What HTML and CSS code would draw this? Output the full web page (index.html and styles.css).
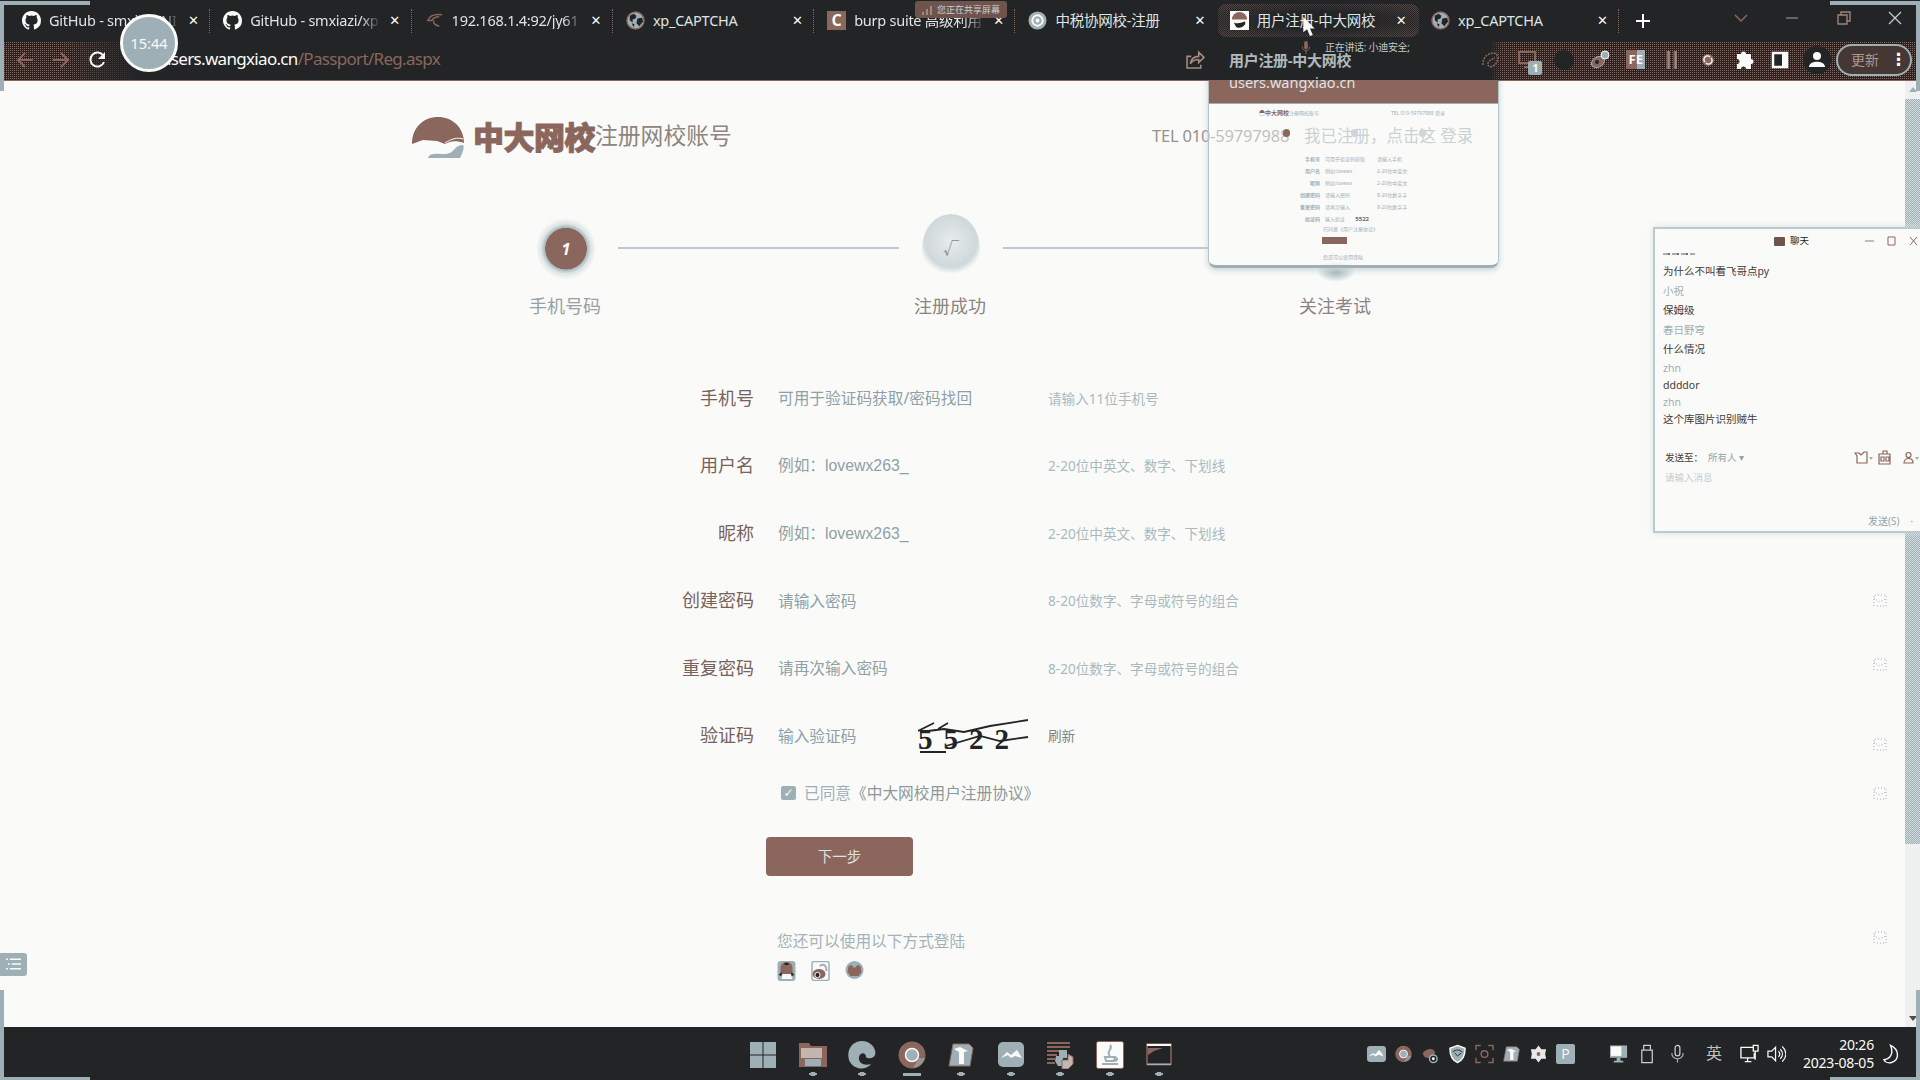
FILE: index.html
```html
<!DOCTYPE html>
<html lang="zh-CN">
<head>
<meta charset="utf-8">
<title>用户注册-中大网校</title>
<link rel="stylesheet" href="styles.css">
</head>
<body>
<svg class="defs" width="0" height="0">
  <symbol id="github" viewBox="0 0 16 16"><path fill="currentColor" d="M8 0C3.58 0 0 3.58 0 8c0 3.54 2.29 6.53 5.47 7.59.4.07.55-.17.55-.38v-1.49c-2.01.37-2.53-.49-2.69-.94-.09-.23-.48-.94-.82-1.13-.28-.15-.68-.52-.01-.53.63-.01 1.08.58 1.23.82.72 1.21 1.87.87 2.33.66.07-.52.28-.87.51-1.07-1.78-.2-3.64-.89-3.64-3.95 0-.87.31-1.59.82-2.15-.08-.2-.36-1.02.08-2.12 0 0 .67-.21 2.2.82a7.4 7.4 0 0 1 4 0c1.53-1.04 2.2-.82 2.2-.82.44 1.1.16 1.92.08 2.12.51.56.82 1.27.82 2.15 0 3.07-1.87 3.75-3.65 3.95.29.25.54.73.54 1.48v2.2c0 .21.15.46.55.38A8 8 0 0 0 16 8c0-4.42-3.58-8-8-8z"/></symbol>
  <symbol id="globe" viewBox="0 0 20 20"><circle cx="10" cy="10" r="9" fill="#9eb0b6" stroke="#8b665d" stroke-width="1.5"/><path fill="#222426" d="M4 5l4-2 3 2-1 3-3 1v3l-3-2zM12 8l5-1 1 4-4 5-3-3zM6 13l3 1-1 3z"/></symbol>
  <symbol id="site" viewBox="0 0 20 20"><path fill="#fafbf9" d="M0 0h20v20H0z"/><path fill="#8b665d" d="M2 9a8 8 0 0 1 16 0z"/><path fill="#222426" d="M4 12c4 2 8 0 12-1v3c-3 4-8 5-10 2z"/></symbol>
  <symbol id="bird" viewBox="0 0 24 20"><rect width="24" height="20" rx="4" fill="#9eb0b6"/><path fill="#fafbf9" d="M2 13l5-4 4 1 4-5 3 3 3 5-6-2-5 2-2-2z"/></symbol>
  <symbol id="chrome" viewBox="0 0 28 28"><circle cx="14" cy="14" r="13.5" fill="#8b665d"/><path fill="#9eb0b6" opacity=".6" d="M27 17a13 13 0 0 1-12 10l6-10z"/><circle cx="14" cy="14" r="6.5" fill="#9eb0b6" stroke="#fafbf9" stroke-width="1.5"/></symbol>
  <symbol id="tee" viewBox="0 0 26 24"><path fill="#9eb0b6" stroke="#8b665d" d="M5 1h16l4 4-3 18H1z"/><path fill="#fafbf9" d="M6 6l6-2 8 4-4 1v12h-5V9z"/></symbol>
  <symbol id="mail" viewBox="0 0 14 14"><path d="M1 12V1h12v11M1 4l5 4 7-3M4 12h7" fill="none" stroke="#9eb0b6" stroke-dasharray="1 2"/></symbol>
</svg>

<header class="tabs">
  <div class="tab"><svg class="fav"><use href="#github"/></svg><span class="tab-title fade">GitHub - smxiazi/NI</span><b class="x">✕</b></div>
  <div class="tab"><svg class="fav"><use href="#github"/></svg><span class="tab-title fade">GitHub - smxiazi/xp</span><b class="x">✕</b></div>
  <div class="tab"><svg class="fav" viewBox="0 0 20 20"><path d="M18 4C10 3 5 5 3 10h4c2-3 4-4 8-4M9 10c0 4 2 5 6 6" fill="none" stroke="#8b665d" stroke-width="1.600"/></svg><span class="tab-title fade">192.168.1.4:92/jy61</span><b class="x">✕</b></div>
  <div class="tab"><svg class="fav"><use href="#globe"/></svg><span class="tab-title">xp_CAPTCHA</span><b class="x">✕</b></div>
  <div class="tab"><i class="fav c-icon">C</i><span class="tab-title fade">burp suite 高级利用</span><b class="x">✕</b></div>
  <div class="tab"><svg class="fav" viewBox="0 0 20 20"><circle cx="10" cy="10" r="9.5" fill="#9eb0b6"/><circle cx="10" cy="10" r="5.5" fill="none" stroke="#fafbf9" stroke-width="2"/><circle cx="10" cy="10" r="2" fill="#fafbf9"/></svg><span class="tab-title">中税协网校-注册</span><b class="x">✕</b></div>
  <div class="tab active"><svg class="fav"><use href="#site"/></svg><span class="tab-title">用户注册-中大网校</span><b class="x">✕</b></div>
  <div class="tab"><svg class="fav"><use href="#globe"/></svg><span class="tab-title">xp_CAPTCHA</span><b class="x">✕</b></div>
  <svg class="plus" viewBox="0 0 14 14"><path d="M7 0v14M0 7h14" stroke="#fafbf9" stroke-width="2"/></svg>
  <div class="window-buttons">
    <svg viewBox="0 0 14 14"><path d="M1 4l6 6 6-6" fill="none" stroke="#8b665d" stroke-width="1.5"/></svg>
    <svg viewBox="0 0 14 14"><path d="M1 7h12" stroke="#9eb0b6"/></svg>
    <svg viewBox="0 0 14 14"><path d="M1 4h9v9H1zM4 4V1h9v9h-3" fill="none" stroke="#9c8379" stroke-width="1.4"/></svg>
    <svg viewBox="0 0 14 14"><path d="M1 1l12 12M13 1L1 13" stroke="#c9d0d2" stroke-width="1.2"/></svg>
  </div>
</header>

<nav class="toolbar">
  <div class="nav-buttons">
    <svg viewBox="0 0 18 18"><path d="M17 9H2M9 2L2 9l7 7" fill="none" stroke="#8b665d" stroke-width="2"/></svg>
    <svg viewBox="0 0 18 18"><path d="M1 9h15M9 2l7 7-7 7" fill="none" stroke="#8b665d" stroke-width="2"/></svg>
    <svg viewBox="0 0 18 18"><path d="M15.5 5A7 7 0 1 0 16 11" fill="none" stroke="#fafbf9" stroke-width="2"/><path d="M17 1v7h-7z" fill="#fafbf9"/></svg>
  </div>
  <div class="address"><span>users.wangxiao.cn<em>/Passport/Reg.aspx</em></span>
    <svg class="share" viewBox="0 0 18 18"><path d="M5 6H1v11h13v-3M4 13c1-5 4-7 8-7V2l5 5-5 5V9C8 9 6 10 4 13z" fill="none" stroke="#a58b82" stroke-width="1.5"/></svg>
  </div>
  <div class="extensions">
    <svg viewBox="0 0 20 20"><path d="M2 15c0-8 4-11 10-12 5 0 6 5 4 9-3 5-8 6-9 3s3-6 7-7" fill="none" stroke="#8b665d" stroke-width="1.6" stroke-dasharray="2 1"/></svg>
    <div class="ext-badge"><svg viewBox="0 0 20 20"><path d="M2 2h16v11H2zM7 17h6" fill="none" stroke="#8b665d" stroke-width="2"/></svg><span>1</span></div>
    <i class="dark-dot"></i>
    <svg viewBox="0 0 20 20"><ellipse cx="8" cy="12" rx="7" ry="5" transform="rotate(-30 8 12)" fill="#8b665d" stroke="#9eb0b6"/><circle cx="7" cy="12" r="2" fill="#222426"/><circle cx="15" cy="5" r="4" fill="#9eb0b6" stroke="#fafbf9"/></svg>
    <i class="fe">FE</i>
    <svg viewBox="0 0 20 20"><path d="M6 1v18M13 1v18" stroke="#8b665d" stroke-width="3"/><path d="M7 1v18M14 1v18" stroke="#9eb0b6" stroke-width="1"/></svg>
    <svg viewBox="0 0 20 20"><circle cx="10" cy="10" r="6" fill="#8b665d"/><path d="M7 12a3.5 3.5 0 0 1 5-5M13 8a3.5 3.5 0 0 1-5 5" fill="none" stroke="#fafbf9" stroke-width="1.5"/></svg>
    <svg viewBox="0 0 20 20"><path fill="#fafbf9" d="M3 4h4a2.5 2.5 0 1 1 5 0h5v5a2.5 2.5 0 1 1 0 5v5h-5a2.5 2.5 0 1 0-5 0H3v-5a2.5 2.5 0 1 0 0-5z"/></svg>
    <svg viewBox="0 0 20 20"><path d="M3 3h14v14H3z" fill="#222426" stroke="#fafbf9" stroke-width="2.5"/><path d="M12 3h5v14h-5z" fill="#fafbf9"/></svg>
    <svg class="person" viewBox="0 0 28 28"><circle cx="14" cy="14" r="14" fill="#222426"/><circle cx="14" cy="10" r="4" fill="#fafbf9"/><path d="M6 21c0-7 16-7 16 0z" fill="#fafbf9"/></svg>
    <button class="update">更新<span>⋮</span></button>
  </div>
</nav>

<div class="browser">
  <main class="page">
    <div class="head">
      <svg class="logo" viewBox="0 0 52 41"><path fill="#8b665d" d="M0 27C0 10 12 0 26 0s26 10 26 26c-8-3-14-2-19 1l-8-3-14-1z"/><path d="M33 26c6-4 12-6 18-4M36 28c5-2 9-3 14-2" fill="none" stroke="#fafbf9"/><path fill="#9eb0b6" d="M16 41c2-6 10-4 18-4 9-1 8-9 17-9 2 3-1 9-3 13z"/></svg>
      <strong>中大网校</strong><h1>注册网校账号</h1>
      <p class="tel">TEL 010-59797988</p><p class="login">我已注册，点击这 登录</p>
    </div>
    <div class="steps">
      <div class="step"><i class="ball on">1</i><span class="pale">手机号码</span></div>
      <i class="line"></i>
      <div class="step"><i class="ball">√</i><span>注册成功</span></div>
      <i class="line last"></i>
      <div class="step"><i class="ball covered"></i><span>关注考试</span></div>
    </div>
    <form class="form">
      <div class="row"><label>手机号</label><span class="field">可用于验证码获取/密码找回</span><small>请输入11位手机号</small></div>
      <div class="row"><label>用户名</label><span class="field">例如：<u>lovewx263_</u></span><small>2-20位中英文、数字、下划线</small></div>
      <div class="row"><label>昵称</label><span class="field">例如：<u>lovewx263_</u></span><small>2-20位中英文、数字、下划线</small></div>
      <div class="row"><label>创建密码</label><span class="field">请输入密码</span><small>8-20位数字、字母或符号的组合</small></div>
      <div class="row"><label>重复密码</label><span class="field">请再次输入密码</span><small>8-20位数字、字母或符号的组合</small></div>
      <div class="row"><label>验证码</label><span class="field short">输入验证码</span>
        <span class="captcha"><span>5522</span><svg viewBox="0 0 110 36"><path d="M0 13L16 5M20 11l10-6M2 14l24-3 20 3 26-6L110 2M28 28l34-10 20 5 28-4M2 34h26" fill="none" stroke="#222426" stroke-width="1.8"/></svg></span>
        <small class="refresh">刷新</small></div>
      <div class="agree"><i class="check">✓</i><span>已同意<b>《中大网校用户注册协议》</b></span></div>
      <div class="submit">下一步</div>
      <p class="other">您还可以使用以下方式登陆</p>
      <div class="social">
        <svg viewBox="0 0 18 20"><rect width="18" height="20" rx="3" fill="#9eb0b6"/><path fill="#8b665d" d="M3 14V7c0-8 12-8 12 0v7z"/><path fill="#222426" d="M7 2h4v2H7zM1 14l3-3v4zM17 14l-3-3v4z"/><path fill="#fafbf9" d="M5 13h8l2 5H4z"/></svg>
        <svg viewBox="0 0 18 20"><rect x=".5" y=".5" width="17" height="19" rx="2" fill="#fafbf9" stroke="#9eb0b6" stroke-width="1.5"/><path d="M8 5c5-3 7 0 7 5" fill="none" stroke="#9eb0b6" stroke-width="2"/><ellipse cx="7.500" cy="13" rx="6.500" ry="5" fill="#8b665d"/><circle cx="6" cy="14" r="2.600" fill="#222426" stroke="#fafbf9"/></svg>
        <svg viewBox="0 0 18 20"><circle cx="9" cy="9" r="9" fill="#9eb0b6"/><path fill="#8b665d" d="M3 5l3-1 3 3 3-3 3 1 1 6-3 4H5l-3-4z"/></svg>
      </div>
    </form>
    <aside class="marks">
      <svg><use href="#mail"/></svg><svg><use href="#mail"/></svg><svg><use href="#mail"/></svg><svg><use href="#mail"/></svg><svg><use href="#mail"/></svg>
    </aside>
  </main>
  <div class="scrollbar"><i class="up"></i><i class="thumb"></i><i class="down"></i></div>
</div>

<footer class="taskbar">
  <div class="apps">
    <svg viewBox="0 0 28 28"><path fill="#9eb0b6" d="M1 1h12.500v12.500H1zM14.500 1H27v12.500H14.500zM1 14.500h12.500V27H1zM14.500 14.500H27V27H14.500z"/></svg>
    <svg class="run" viewBox="0 0 28 28"><path fill="#8b665d" d="M0 2h10l2 3h16v21H0z"/><path fill="#c4b5b0" d="M2 7h21v10H2z"/><path fill="#9eb0b6" d="M6 18h16v7H6z"/></svg>
    <svg class="run" viewBox="0 0 28 28"><path fill="#9eb0b6" d="M14 0c9 0 15 8 13 14-2 5-9 3-9 2 0-5-6-5-7 0-1 7 6 9 12 7-5 7-18 6-22-4C-2 8 5 0 14 0z"/></svg>
    <svg class="run current" viewBox="0 0 28 28"><use href="#chrome"/></svg>
    <svg class="run" viewBox="0 0 28 28"><use href="#tee" x="1" y="2" width="26" height="24"/></svg>
    <svg class="run" viewBox="0 0 28 28"><rect x="1" y="1" width="26" height="25" rx="5" fill="#9eb0b6"/><path fill="#fafbf9" d="M4 17l6-6 4 3 6-5 5 8-7-2-4 2-3-3z"/></svg>
    <svg class="run" viewBox="0 0 28 28"><path d="M1 2h23M1 6h23M1 10h12M1 14h10M1 18h8M1 22h8" stroke="#8b665d" stroke-width="2"/><path fill="#9eb0b6" d="M13 9h8v8h-4v8h-5l-3-5 1-5h3z"/><path fill="#c4b5b0" stroke="#8b665d" d="M22 13l5 3v7l-5 5h-6v-9h6z"/></svg>
    <svg class="run" viewBox="0 0 28 28"><rect x=".500" y=".500" width="27" height="27" rx="2" fill="#fafbf9" stroke="#8b665d"/><path d="M14 4c4 4-5 6 0 11M9 16h10l-1 4h-8zM19 17c4 0 2 3-1 3M6 23h16" fill="none" stroke="#9eb0b6" stroke-width="2"/></svg>
    <svg class="run" viewBox="0 0 28 28"><path d="M2 3h24v20H2z" fill="#222426" stroke="#8b665d" stroke-width="1.500"/><path d="M2 4h24" stroke="#fafbf9" stroke-width="2"/><path d="M3 7h15l-9 3-6 4z" fill="#8b665d"/><path d="M2 23.500h24" stroke="#9eb0b6" stroke-width="1.500"/></svg>
  </div>
  <div class="tray">
    <svg viewBox="0 0 20 20"><use href="#bird" y="1" width="20" height="18"/></svg>
    <svg viewBox="0 0 20 20"><use href="#chrome" x="1" y="1" width="18" height="18"/></svg>
    <svg viewBox="0 0 20 20"><path fill="#8b665d" d="M2 9c2-4 12-7 13 0l-5 5C6 15 2 13 2 9z"/><circle cx="13" cy="15" r="4" fill="#222426" stroke="#9eb0b6" stroke-width="1.500"/><circle cx="13" cy="15" r="1.500" fill="#fafbf9"/></svg>
    <svg viewBox="0 0 20 20"><path fill="#9eb0b6" stroke="#fafbf9" stroke-width="1.500" d="M10 1l8 3c0 8-3 13-8 15C5 17 2 12 2 4z"/><path d="M5 8c3-3 7-3 10 0M7 9l3 3 4-3" fill="none" stroke="#222426"/></svg>
    <svg viewBox="0 0 20 20"><path d="M1 6V1h5M14 1h5v5M19 14v5h-5M6 19H1v-5" fill="none" stroke="#8b665d" stroke-width="1.500"/><circle cx="10" cy="10" r="3.500" fill="none" stroke="#8b665d" stroke-width="1.500"/></svg>
    <svg viewBox="0 0 20 20"><use href="#tee" x="1" y="1" width="18" height="18"/></svg>
    <svg viewBox="0 0 20 20"><path fill="#e6eae9" d="M10 1l3 4 5 0-1 5 1 5-5 0-3 4-3-4-5 0 1-5-1-5 5 0z"/><circle cx="10" cy="10" r="2" fill="#8b665d"/></svg>
    <i class="p-icon">P</i>
    <svg class="after-gap" viewBox="0 0 20 20"><path fill="#9eb0b6" d="M0 1h18v13H0z"/><path fill="#fafbf9" d="M1 2h11v10H1z"/><path fill="#9eb0b6" d="M7 14h4v3h3v2H4v-2h3z"/></svg>
    <svg viewBox="0 0 20 20"><path d="M6 1h7v5H6zM4 6h11v13H4z" fill="none" stroke="#c9d0d2" stroke-width="1.300"/></svg>
    <svg class="mic" viewBox="0 0 20 20"><rect x="7.500" y="1" width="5" height="11" rx="2.500" fill="none" stroke="#c9d0d2" stroke-width="1.300"/><path d="M4 9c0 8 12 8 12 0M10 15v4" fill="none" stroke="#9eb0b6" stroke-width="1.300"/></svg>
    <span class="lang">英</span>
    <svg class="net" viewBox="0 0 20 20"><path d="M14 3H1v11h14V9M5 18h7M8 14v4M14 1h5v6h-5zM16 7v9" fill="none" stroke="#fafbf9" stroke-width="1.400"/></svg>
    <svg class="vol" viewBox="0 0 20 20"><path d="M1 7h4l4-4v14l-4-4H1zM12 7c2 2 2 4 0 6M14 5c3 3 3 7 0 10M16 2c5 5 5 11 0 16" fill="none" stroke="#fafbf9" stroke-width="1.300"/></svg>
    <div class="clock"><span>20:26</span><span>2023-08-05</span></div>
    <svg class="moon" viewBox="0 0 20 20"><path d="M9 1c9 4 10 15 1 18-4 1-7-1-8-3 8-1 10-8 7-15z" fill="none" stroke="#fafbf9" stroke-width="1.500"/></svg>
  </div>
</footer>

<div class="hovercard">
  <div class="hover-head"></div>
  <div class="hover-url"></div>
  <div class="thumbnail">
    <div class="mini-head"><b>◓中大网校</b><span>注册网校账号</span><span class="mini-tel">TEL 010-59797988 登录</span></div>
    <div class="mini-steps"><i class="mini-on"></i><i></i><i></i></div>
    <div class="mini-rows">
      <b>手机号</b><span>可用于验证码获取</span><span>请输入手机</span>
      <b>用户名</b><span>例如:lovewx</span><span>2-20位中英文</span>
      <b>昵称</b><span>例如:lovewx</span><span>2-20位中英文</span>
      <b>创建密码</b><span>请输入密码</span><span>8-20位数字字</span>
      <b>重复密码</b><span>请再次输入</span><span>8-20位数字字</span>
      <b>验证码</b><span>输入验证 <strong>5522</strong></span><span></span>
    </div>
    <p class="mini-agree">已同意《用户注册协议》</p>
    <i class="mini-button"></i>
    <p class="mini-other">您还可以使用登陆</p>
  </div>
</div>
<div class="hover-text"><strong>用户注册-中大网校</strong><span>users.wangxiao.cn</span></div>
<div class="speaking"><svg viewBox="0 0 10 14"><rect x="3" width="4" height="9" rx="2" fill="#8b665d"/><path d="M1 6c0 6 8 6 8 0M5 10v4" fill="none" stroke="#8b665d"/></svg><span>正在讲话: 小迪安全;</span></div>
<div class="sharing"><svg viewBox="0 0 12 10"><path d="M2 10V7M6 10V4M10 10V1" stroke="#b09a93" stroke-width="1.500"/></svg>您正在共享屏幕</div>
<div class="timer">15:44</div>
<svg class="cursor" viewBox="0 0 12 20"><path fill="#fafbf9" d="M0 0v16l4-3 3 7 3-1-3-7h5z"/></svg>
<div class="side-tag"><svg viewBox="0 0 16 14"><path d="M4 2h12M6 7h10M4 12h12M0 2h2M2 7h2M0 12h2" stroke="#fafbf9" stroke-width="1.500"/></svg></div>

<section class="chat">
  <div class="chat-title"><i></i><span>聊天</span>
    <svg viewBox="0 0 52 10"><path d="M0 5h9" stroke="#9eb0b6" stroke-width="1.500"/><path d="M23 1h7v8h-7z" fill="none" stroke="#8b665d"/><path d="M45 1l7 8M52 1l-7 8" stroke="#8b665d"/></svg></div>
  <div class="messages">
    <p class="cut"></p><p>为什么不叫看飞哥点py</p><p class="who">小祝</p><p>保姆级</p><p class="who">春日野穹</p><p>什么情况</p><p class="who tight">zhn</p><p class="tight">ddddor</p><p class="who tight">zhn</p><p class="tight">这个库图片识别贼牛</p>
  </div>
  <div class="send-to"><b>发送至：</b><span>所有人 ▾</span>
    <svg viewBox="0 0 66 16"><path d="M1 3h4l2 2 3-3h3v11H3V6zM25 4h11v10H25zM29 4V1h4v3M27 7h3v4h-3zM32 7h3v4h-3zM50 13c0-6 9-6 9 0zM52 5a2.500 2.500 0 1 1 5 0 2.500 2.500 0 0 1-5 0" fill="none" stroke="#8b665d" stroke-width="1.200"/><path d="M15 7h4l-2 3zM61 7h4l-2 3z" fill="#9eb0b6"/></svg></div>
  <p class="chat-input">请输入消息</p>
  <p class="send">发送(S)<i>·</i></p>
</section>
<i class="corner tl"></i><i class="corner tr"></i><i class="corner bl"></i><i class="corner br"></i>
</body>
</html>
```
FILE: styles.css
```css
:root {
  --ink: #222426;
  --paper: #fafbf9;
  --brown: #8b665d;
  --teal: #9eb0b6;
  --ui: "Noto Sans", "Noto Sans CJK SC", sans-serif;
}
* { box-sizing: border-box; }
body {
  margin: 0; width: 1920px; height: 1080px; overflow: hidden; position: relative;
  display: flex; flex-direction: column;
  background: var(--paper); color: var(--ink);
  font: 15px/1.2 var(--ui);
}
p, h1 { margin: 0; font-weight: 400; }
i, em { font-style: normal; }
u { text-decoration: none; }
.defs { position: absolute; }

/* tab strip */
.tabs { height: 41px; flex: none; background: var(--ink); color: #dfe3e3; display: flex; align-items: center; padding-left: 10px; }
.tab { width: 201.300px; height: 33px; flex: none; display: flex; align-items: center; padding: 0 8px 0 12px; position: relative; white-space: nowrap; }
.tab::after { content: ""; width: 1px; height: 24px; border-left: 1px dotted var(--brown); position: absolute; right: 0; top: 5px; }
.tab.active::after, .tab:nth-child(6)::after { display: none; }
.tab.active { border-radius: 8px; background: radial-gradient(var(--ink) 35%, transparent 90%), repeating-conic-gradient(#5e4a45 0 25%, var(--ink) 0 50%) 0 0/2px 2px; }
.fav { width: 19px; height: 19px; flex: none; color: var(--paper); }
.c-icon { background: var(--brown); font: 700 16px/18px "Open Sans", sans-serif; text-align: center; }
.tab-title { margin-left: 8px; width: 131px; overflow: hidden; font-size: 14.500px; letter-spacing: -.25px; }
.fade { -webkit-mask-image: linear-gradient(90deg, #000 85%, transparent); mask-image: linear-gradient(90deg, #000 85%, transparent); }
.x { margin-left: 8px; width: 14px; font: 700 13px/1 "DejaVu Sans", sans-serif; color: var(--paper); }
.plus { width: 14px; height: 14px; margin-left: 16px; }
.window-buttons { margin: -6px 18px 0 auto; display: flex; gap: 37.500px; }
.window-buttons svg { width: 14px; height: 14px; }

/* toolbar */
.toolbar { height: 40px; flex: none; display: flex; align-items: center; padding-bottom: 2px; border-bottom: 1px solid var(--brown); background: linear-gradient(90deg, transparent 4px, transparent 60px, var(--ink) 140px, var(--ink) 1490px, transparent 1502px), repeating-linear-gradient(0deg, var(--ink) 0 1px, transparent 1px 2px), repeating-linear-gradient(90deg, var(--brown) 0 1px, var(--ink) 1px 2px); }
.nav-buttons { display: flex; gap: 18px; padding-left: 16px; }
.nav-buttons svg { width: 18px; height: 18px; }
.address { margin-left: 55px; width: 1044px; display: flex; justify-content: space-between; align-items: center; font-size: 17px; letter-spacing: -.68px; color: var(--paper); }
.address em { color: var(--brown); }
.share { width: 19px; height: 19px; }
.extensions { margin: 0 8px 0 auto; display: flex; align-items: center; gap: 16.300px; }
.extensions > svg { width: 20px; height: 20px; }
.extensions > .person { width: 28px; height: 28px; margin: 0 -4px; }
.ext-badge { width: 20px; height: 20px; position: relative; }
.ext-badge span { position: absolute; left: 11px; top: 11px; width: 14px; height: 14px; border-radius: 2px; background: var(--teal); color: var(--paper); font: 700 11px/14px "Open Sans", sans-serif; text-align: center; }
.dark-dot { width: 20px; height: 20px; border-radius: 50%; background: var(--ink); }
.fe { width: 19px; height: 19px; background: linear-gradient(90deg, var(--brown) 60%, var(--teal) 0); color: var(--paper); font: 700 13px/19px "Open Sans", sans-serif; text-align: center; }
.update { margin-left: -7px; width: 76px; height: 32px; padding: 0 8px 0 13px; border: 2px solid var(--teal); border-radius: 16px; background: #453734; color: #a89790; font: 14px/1 var(--ui); display: flex; align-items: center; justify-content: space-between; }
.update span { color: var(--paper); font: 700 17px/1 "DejaVu Sans", sans-serif; width: 12px; text-align: center; }

/* page */
.browser { flex: 1; min-height: 0; display: flex; }
.page { flex: 1; position: relative; padding-top: 34px; }
.head { display: flex; align-items: center; height: 41px; padding-left: 412px; white-space: nowrap; }
.logo { width: 52px; height: 41px; position: relative; top: 2px; }
.head strong { margin-left: 9px; width: 122px; font: 900 31px/38px "Noto Sans CJK SC", sans-serif; letter-spacing: -.500px; color: var(--brown); -webkit-text-stroke: 1px var(--brown); }
.head h1 { width: 136px; font-size: 22.800px; color: #8e8480; }
.tel { margin-left: 421px; width: 152px; font-size: 16.500px; letter-spacing: -.2px; color: #94918f; }
.login { font-size: 16.500px; color: var(--teal); }
.steps { margin: 58px 0 0 516px; display: flex; align-items: flex-start; }
.step { width: 100px; display: flex; flex-direction: column; align-items: center; font-size: 18px; color: #8b8482; }
.step .pale { color: #97a0a2; }
.step span { margin: 11px 2px 0 0; line-height: 26px; }
.ball { width: 58px; height: 68px; padding-top: 1px; display: grid; place-items: center; border-radius: 50%; font-size: 16px; color: #7f898c; background: radial-gradient(circle at 50% 40%, #e8ecec 0, #cfd8da 26px, transparent 33px); }
.ball.on { background: radial-gradient(circle at 50% 51%, var(--brown) 0 20.500px, #a6b6bb 21px, #dfe5e5 25px, transparent 31px); color: #fff; font: italic 700 16px/1 "Open Sans", sans-serif; }
.ball.covered { background: radial-gradient(ellipse 20px 10px at 50% 58px, var(--teal), transparent); }
.line { width: 281px; height: 2px; margin: 33px 2px 0 2px; background: #bdc9cc; }
.line.last { background: linear-gradient(90deg, #bdc9cc 205px, transparent 0); }
.form { padding-top: 46px; }
.row { height: 67.500px; display: flex; align-items: center; }
.row label { width: 754px; text-align: right; font-size: 18px; color: #77625d; }
.field { margin-left: 24px; width: 270px; font-size: 15.700px; color: #8fa0a6; white-space: nowrap; }
.field u { font-family: "Liberation Sans", sans-serif; font-size: 15.800px; }
.field.short { width: 140px; }
.row small { font-size: 13.600px; color: #a9b9be; white-space: nowrap; }
.captcha { width: 110px; height: 36px; margin-right: 20px; position: relative; font: 700 29px/42px "Liberation Serif", serif; letter-spacing: 11px; }
.captcha svg { position: absolute; inset: 0; }
.row .refresh { color: #7b8487; }
.agree { display: flex; align-items: center; gap: 8px; padding-left: 781px; margin-top: 9px; height: 28px; font-size: 15.700px; color: #9fb0b5; }
.agree b { font-weight: 400; color: #8c9899; }
.check { width: 15px; height: 14px; border-radius: 2px; background: var(--teal); color: var(--paper); font: 700 12px/14px "DejaVu Sans", sans-serif; text-align: center; }
.submit { margin: 30px 0 0 766px; width: 147px; height: 39px; border-radius: 4px; background: var(--brown); color: #dde2e2; font-size: 14.500px; line-height: 39px; text-align: center; }
.other { margin: 53px 0 0 777px; line-height: 24px; font-size: 15.700px; color: #a2b3b8; }
.social { display: flex; gap: 15px; margin: 8px 0 0 777px; }
.social svg { width: 19px; height: 20px; }
.marks { position: absolute; right: 18px; top: 513px; display: grid; grid-template-rows: 64px 80px 49px 144px 14px; }
.marks svg { width: 14px; height: 14px; }
.scrollbar { width: 15px; display: flex; flex-direction: column; align-items: center; background: #eef1f0; }
.scrollbar .up { margin: 6px 0 7px; border: 4px solid transparent; border-top: 0; border-bottom: 5px solid var(--teal); }
.thumb { width: 100%; height: 745px; background: repeating-conic-gradient(var(--teal) 0 25%, #d3dbdd 0 50%) 0 0/2px 2px; }
.down { margin: auto 0 6px; border: 4px solid transparent; border-bottom: 0; border-top: 5px solid #5d4642; }

/* taskbar */
.taskbar { height: 53px; flex: none; background: var(--ink); color: var(--paper); display: flex; padding-left: 749px; }
.apps { display: flex; gap: 21.500px; padding-top: 14px; }
.apps svg { width: 28px; height: 41px; padding-bottom: 13px; }
.apps .run { background: radial-gradient(ellipse 4px 2px at 50% 33px, var(--teal) 90%, transparent); }
.apps .current { background: linear-gradient(var(--teal), var(--teal)) 50% 32px/18px 3px no-repeat; }
.tray { flex: 1; display: flex; align-items: center; margin-left: 194px; }
.tray svg, .p-icon { width: 19px; height: 20px; flex: none; margin-right: 8px; }
.p-icon { background: var(--teal); border-radius: 2px; font: 14px/20px "Open Sans", sans-serif; text-align: center; }
.tray .after-gap { margin-left: 27px; margin-right: 9px; }
.tray .mic { margin-left: 3px; margin-right: 19px; }
.lang { width: 18px; margin-right: 16px; font-size: 16px; color: #c4c0bc; }
.clock { margin-left: auto; width: 80px; display: flex; flex-direction: column; align-items: flex-end; font-size: 14px; line-height: 18px; letter-spacing: -.200px; white-space: nowrap; }
.tray .moon { margin: 0 19px 0 8px; }

/* overlays */
.hovercard { position: absolute; left: 1208px; top: 46px; width: 291px; height: 222px; border-radius: 8px; border: 1px solid #b6c4c8; border-top: 0; border-bottom: 3px solid var(--teal); box-shadow: 0 2px 6px #c5d0d3; clip-path: inset(35px -8px -8px -8px); overflow: hidden; }
.hover-head { height: 35px; background: var(--ink); }
.hover-url { height: 23px; background: var(--brown); border-bottom: 1px solid var(--teal); }
.thumbnail { height: 164px; padding: 5px 8px; background: rgba(250, 251, 249, .45); font-size: 5px; line-height: 8px; color: var(--teal); white-space: nowrap; }
.mini-head { display: flex; padding-left: 42px; }
.mini-head b { color: var(--brown); font-size: 6px; }
.mini-tel { margin-left: 72px; }
.mini-steps { display: flex; gap: 61px; padding: 12px 0 0 66px; height: 38px; }
.mini-steps i { width: 7px; height: 8px; border-radius: 4px; background: #cdd7d9; }
.mini-steps .mini-on { background: var(--brown); }
.mini-rows { display: grid; grid-template-columns: 103px 47px 1fr; grid-auto-rows: 12px; column-gap: 5px; }
.mini-rows b { text-align: right; }
.mini-rows strong { color: #716561; font-size: 6px; margin-left: 9px; }
.mini-agree { padding: 0 0 0 106px; margin-top: -2px; }
.mini-button { display: block; width: 25px; height: 7px; margin: 4px 0 0 105px; background: var(--brown); }
.mini-other { padding: 9px 0 0 106px; }
.hover-text { position: absolute; left: 1229px; top: 49px; display: flex; flex-direction: column; color: #dfe3e3; font-size: 14.500px; line-height: 20px; }
.hover-text strong { font-size: 15px; line-height: 23px; color: #aebabd; font-weight: 700; letter-spacing: -.3px; }
.speaking { position: absolute; left: 1301px; top: 41px; display: flex; gap: 14px; align-items: center; height: 12px; font-size: 10px; letter-spacing: -.3px; color: #c4c8c8; background: var(--ink); }
.speaking svg { width: 10px; height: 13px; }
.sharing { position: absolute; left: 915px; top: 1px; width: 92px; height: 17px; border-radius: 3px; background: #6f544d; color: #c7cfd1; display: flex; align-items: center; gap: 4px; padding-left: 6px; font-size: 9px; line-height: 17px; white-space: nowrap; }
.sharing svg { width: 12px; height: 10px; }
.timer { position: absolute; left: 120px; top: 14px; width: 58px; height: 58px; border-radius: 50%; border: 3px solid var(--paper); background: var(--teal); color: var(--paper); font-size: 14.500px; line-height: 52px; text-align: center; }
.cursor { position: absolute; left: 1303px; top: 17px; width: 12px; height: 19px; }
.side-tag { position: absolute; left: 0; top: 953px; width: 27px; height: 23px; border-radius: 0 3px 3px 0; background: var(--teal); padding: 4px 0 0 6px; }
.side-tag svg { width: 15px; height: 14px; display: block; }
.chat { position: absolute; left: 1655px; top: 229px; width: 265px; height: 302px; background: var(--paper); padding: 0 0 0 8px; box-shadow: 0 0 0 2px #bccacd, 0 0 7px 2px #d5dddf; font-size: 10.500px; white-space: nowrap; }
.chat-title { height: 24px; display: flex; align-items: center; padding-left: 111px; gap: 5px; font-size: 9.500px; }
.chat-title i { width: 11px; height: 9px; background: #6f544e; border-radius: 1px; }
.chat-title svg { width: 52px; height: 10px; margin-left: 51px; }
.messages { height: 184px; color: #43393a; }
.messages p { height: 19.500px; line-height: 19.500px; }
.messages .cut { width: 32px; height: 2px; margin-bottom: 7px; background: repeating-linear-gradient(90deg, var(--teal) 0 5px, var(--brown) 5px 7px, transparent 7px 9px); }
.messages .tight { height: 17px; line-height: 16px; }
.messages .who { color: var(--teal); }
.send-to { display: flex; align-items: center; height: 26px; margin-top: 8px; padding-left: 2px; font-size: 9.500px; color: #93a3a8; }
.send-to b { color: #43393a; font-weight: 400; width: 43px; }
.send-to svg { width: 66px; height: 16px; margin-left: auto; }
.chat-input { color: #c3ced1; font-size: 9.500px; line-height: 14px; padding-left: 2px; }
.send { margin-top: 28px; padding-left: 205px; font-size: 10px; line-height: 16px; color: #93a3a8; }
.send i { margin-left: 11px; }
.corner { position: absolute; border: 0 solid var(--teal); width: 90px; height: 90px; }
.tl { left: 0; top: 1px; border-width: 4px 0 0 4px; }
.tr { right: 0; top: 1px; border-width: 4px 4px 0 0; }
.bl { left: 0; bottom: 0; border-width: 0 0 3px 4px; }
.br { right: 0; bottom: 0; border-width: 0 4px 3px 0; }
```
